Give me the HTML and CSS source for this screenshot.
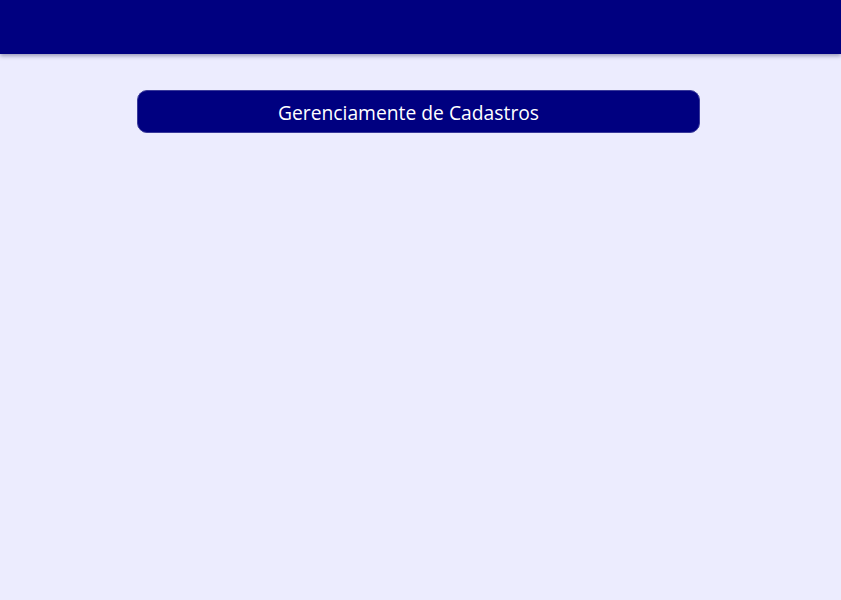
FILE: index.html
```html
<!DOCTYPE html>
<html lang="pt">
<head>
<meta charset="utf-8">
<link rel="stylesheet" href="styles.css">
</head>
<body>
<header class="topbar"></header>
<main class="content">
  <div class="title-bar">Gerenciamente de Cadastros</div>
</main>
</body>
</html>
```
FILE: styles.css
```css
html, body {
  margin: 0;
  padding: 0;
  height: 100%;
}
body {
  background: #ececfe;
  font-family: "Open Sans", "Lato", sans-serif;
}
.topbar {
  height: 54px;
  background: #000080;
  box-shadow: 0 2px 4px rgba(0, 0, 60, 0.35);
}
.content {
  padding-top: 36px;
  display: flex;
  flex-direction: column;
  align-items: center;
}
.title-bar {
  box-sizing: border-box;
  width: 563px;
  margin-right: 4px;
  height: 43px;
  padding-right: 20px;
  padding-top: 1px;
  background: #000080;
  border: 1px solid #3a3a9a;
  border-radius: 10px;
  color: #ffffff;
  font-size: 19.3px;
  display: flex;
  align-items: center;
  justify-content: center;
}
```
